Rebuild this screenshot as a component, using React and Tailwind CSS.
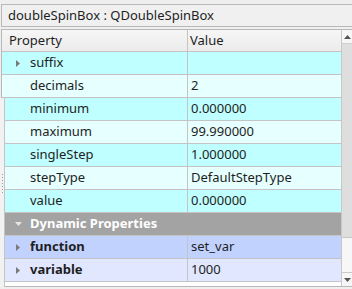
import React from 'react'

const rows = [
  { name: 'suffix', value: '', bg: 'bg-[#c0ffff]', arrow: true },
  { name: 'decimals', value: '2', bg: 'bg-[#e6ffff]' },
  { name: 'minimum', value: '0.000000', bg: 'bg-[#c0ffff]' },
  { name: 'maximum', value: '99.990000', bg: 'bg-[#e6ffff]' },
  { name: 'singleStep', value: '1.000000', bg: 'bg-[#c0ffff]' },
  { name: 'stepType', value: 'DefaultStepType', bg: 'bg-[#e6ffff]' },
  { name: 'value', value: '0.000000', bg: 'bg-[#c0ffff]' },
]

const dynamic = [
  { name: 'function', value: 'set_var', bg: 'bg-[#c2d2ff]' },
  { name: 'variable', value: '1000', bg: 'bg-[#e0e7ff]' },
]

function RightArrow() {
  return (
    <svg width="5" height="7" viewBox="0 0 5 7" className="shrink-0">
      <path d="M0 0 L4 3.5 L0 7 Z" fill="#7a7a7a" />
    </svg>
  )
}

function DownArrow() {
  return (
    <svg width="7" height="5" viewBox="0 0 7 5" className="shrink-0">
      <path d="M0 0 L7 0 L3.5 4 Z" fill="#e6e6e6" />
    </svg>
  )
}

function Row({ name, value, bg, arrow, bold }) {
  return (
    <div className={`flex h-[23px] border-b border-[#c4c4c4] ${bg}`}>
      <div className="flex w-[186px] items-center border-r border-[#c4c4c4]">
        <div className="flex w-[28px] justify-center pl-[4px]">{arrow && <RightArrow />}</div>
        <span className={bold ? 'font-bold' : ''}>{name}</span>
      </div>
      <div className="flex flex-1 items-center pl-[3px]">{value}</div>
    </div>
  )
}

export default function App() {
  return (
    <div
      className="relative h-[289px] w-[352px] overflow-hidden bg-[#efefef] pt-[4px] text-[13px] text-[#1e1e1e]"
      style={{ fontFamily: '"Noto Sans", sans-serif' }}
    >
      <div className="ml-[1px] flex h-[23px] items-center border border-r-0 border-[#b8b8b8] bg-[#f0f0f0] pl-[6px]">
        doubleSpinBox : QDoubleSpinBox
      </div>

      <div className="ml-[1px] mt-[2px] flex h-[258px] border border-r-0 border-[#b8b8b8] bg-white">
        <div className="flex w-[339px] flex-col">
          <div className="flex h-[22px] border-b border-[#c4c4c4] bg-gradient-to-b from-[#f6f6f6] to-[#ececec]">
            <div className="flex w-[186px] items-center border-r border-[#c4c4c4] pl-[7px]">Property</div>
            <div className="flex flex-1 items-center pl-[2px]">Value</div>
          </div>
          {rows.map((r) => (
            <Row key={r.name} {...r} />
          ))}
          <div className="flex h-[23px] items-center border-b border-[#c4c4c4] bg-[#a3a3a3] font-bold text-white">
            <div className="flex w-[28px] justify-center pl-[4px]">
              <DownArrow />
            </div>
            Dynamic Properties
          </div>
          {dynamic.map((r) => (
            <Row key={r.name} {...r} arrow bold />
          ))}
        </div>

        <div className="flex w-[11px] flex-col border-l border-[#c8c8c8] bg-[#dedede]">
          <div className="flex h-[14px] items-center justify-center border-b border-[#d0d0d0] bg-[#f6f6f6]">
            <svg width="7" height="4" viewBox="0 0 7 4">
              <path d="M0 4 L3.5 0 L7 4 Z" fill="#555" />
            </svg>
          </div>
          <div className="flex-1" />
          <div className="h-[36px] border-y border-[#c8c8c8] bg-[#f7f7f7]" />
          <div className="flex h-[13px] items-center justify-center bg-[#f6f6f6]">
            <svg width="7" height="4" viewBox="0 0 7 4">
              <path d="M0 0 L7 0 L3.5 4 Z" fill="#555" />
            </svg>
          </div>
        </div>
      </div>

      {/* splitter strip over the left edge */}
      <div className="absolute left-0 top-[98px] flex h-[189px] w-[5px] flex-col items-center border-r border-[#c4c4c4] bg-[#f2f2f2]">
        <div className="mt-[76px] flex flex-col gap-[2px]">
          {[0, 1, 2, 3, 4, 5, 6].map((i) => (
            <div key={i} className="h-[1px] w-[1px] bg-[#9a9a9a]" />
          ))}
        </div>
      </div>
    </div>
  )
}
